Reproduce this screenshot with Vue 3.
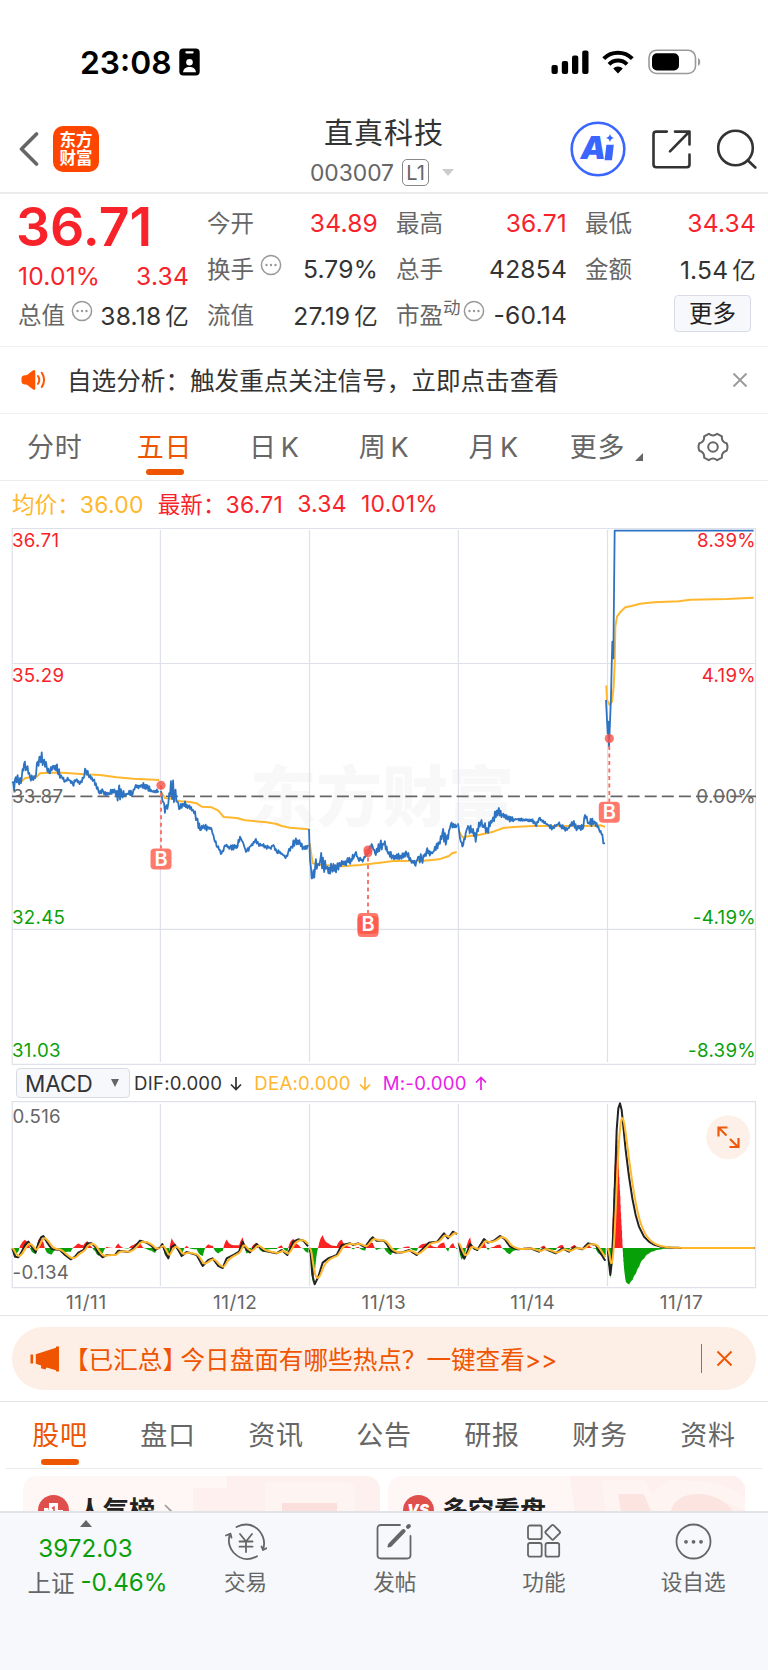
<template>
  <div class="page">
    <!-- 状态栏 -->
    <div class="status-bar">
      <div class="status-left">
        <span class="time">23:08</span>
        <svg class="badge-icon" width="21" height="28" viewBox="0 0 21 28">
          <rect x="0.3" y="0.5" width="20.4" height="27" rx="4" fill="#000" />
          <rect x="6.3" y="3.2" width="8.4" height="2.2" rx="1.1" fill="#fff" />
          <circle cx="10.5" cy="14.2" r="3.3" fill="#fff" />
          <path d="M4 24.3c.4-3.6 3-5.4 6.5-5.4s6.1 1.8 6.5 5.4z" fill="#fff" />
        </svg>
      </div>
      <div class="status-right">
        <svg width="38" height="24" viewBox="0 0 38 24">
          <rect x="0.5" y="15" width="6.3" height="9" rx="2" />
          <rect x="10.8" y="11" width="6.3" height="13" rx="2" />
          <rect x="21" y="5.5" width="6.3" height="18.5" rx="2" />
          <rect x="31.2" y="0.5" width="6.3" height="23.5" rx="2" />
        </svg>
        <svg class="wifi" width="32" height="24" viewBox="0 0 32 24">
          <g fill="none" stroke="#000" stroke-width="4">
            <path d="M1.7 8.6a20.3 20.3 0 0 1 28.6 0" />
            <path d="M7 14.3a12.8 12.8 0 0 1 18 0" />
          </g>
          <path d="M16 23.5l-4.8-4.9a6.8 6.8 0 0 1 9.6 0z" />
        </svg>
        <svg class="battery" width="53" height="26" viewBox="0 0 53 26">
          <rect x="1" y="1.2" width="46.5" height="23.3" rx="7.5" fill="none" stroke="#999" stroke-width="1.6" />
          <rect x="4" y="4.2" width="27" height="17.3" rx="5" />
          <path d="M50 9c3 1.2 3 6.6 0 7.8z" fill="#999" />
        </svg>
      </div>
    </div>

    <!-- 顶部导航 -->
    <header class="header">
      <div class="header-left">
        <svg width="20" height="34" viewBox="0 0 20 34">
          <path d="M17.5 2L2.5 17l15 15" fill="none" stroke="#666" stroke-width="3.6" stroke-linecap="round" stroke-linejoin="round" />
        </svg>
        <div class="logo"><span>东方</span><span>财富</span></div>
      </div>
      <div class="header-title">
        <h1>直真科技</h1>
        <div class="code">
          <span>003007</span>
          <span class="level">L1</span>
          <i class="arrow-down"></i>
        </div>
      </div>
      <div class="header-right">
        <svg width="56" height="56" viewBox="0 0 56 56">
          <circle cx="28" cy="28" r="26.3" fill="none" stroke="#3a66ff" stroke-width="2.6" />
          <text class="ai" x="10.5" y="38">A</text>
          <path d="M36.4 23.8h7.4l-1.8 15.4h-7.4z" fill="#3a66ff" />
          <path d="M40 12.8c.8 2.8 1.4 3.4 4.2 4.2-2.8.8-3.4 1.4-4.2 4.2-.8-2.8-1.4-3.4-4.2-4.2 2.8-.8 3.4-1.4 4.2-4.2z" fill="#3a66ff" />
        </svg>
        <svg width="39" height="39" viewBox="0 0 39 39" fill="none" stroke="#333" stroke-width="2.6" stroke-linecap="round" stroke-linejoin="round">
          <path d="M14.8 1.6H4.2Q1.5 1.6 1.5 4.2v30.3q0 2.7 2.7 2.7h30.6q2.7 0 2.7-2.7V24.5" />
          <path d="M23 1.6h14.5V14.5M37 2L18 21.3" />
        </svg>
        <svg width="40" height="40" viewBox="0 0 40 40" fill="none" stroke="#333" stroke-width="2.6" stroke-linecap="round">
          <circle cx="18.5" cy="19" r="17.3" />
          <path d="M30.7 31.3l7.6 7.2" />
        </svg>
      </div>
    </header>

    <!-- 行情数据 -->
    <section class="quote">
      <div class="quote-col">
        <div class="price">36.71</div>
        <div class="change"><span>10.01%</span><span>3.34</span></div>
        <div class="cell">
          <span class="label">总值</span>
          <svg class="more-dot" width="22" height="22" viewBox="0 0 22 22"><circle cx="11" cy="11" r="9.6" /><path d="M6.5 11h.01M11 11h.01M15.5 11h.01" /></svg>
          <span class="value">38.18<em>亿</em></span>
        </div>
      </div>
      <div v-for="(col, i) in quoteCols" :key="i" class="quote-col">
        <div v-for="item in col" :key="item.label" class="cell">
          <span class="label">{{ item.label }}<sup v-if="item.sup">{{ item.sup }}</sup></span>
          <svg v-if="item.dot" class="more-dot" width="22" height="22" viewBox="0 0 22 22"><circle cx="11" cy="11" r="9.6" /><path d="M6.5 11h.01M11 11h.01M15.5 11h.01" /></svg>
          <span class="value" :class="{ red: item.red }">{{ item.value }}<em v-if="item.unit">{{ item.unit }}</em></span>
        </div>
        <button v-if="i === 2" class="more-btn">更多</button>
      </div>
    </section>

    <!-- 分析提示 -->
    <div class="notice">
      <svg width="25" height="22" viewBox="0 0 25 22">
        <path d="M2.5 6.6L6 6 11.8 1.5Q14.3 0 14.3 2.5v16.8q0 2.5-2.5 1L6 15.8l-3.5-.6Q.5 14.5.5 12.5v-3.2q0-2.2 2-2.7z" fill="#ff5400" />
        <path d="M17 7q2.6 3.9 0 7.8M20.8 3.8q4.6 7 0 14.2" fill="none" stroke="#ff5400" stroke-width="2" stroke-linecap="round" />
      </svg>
      <p>自选分析：触发重点关注信号，立即点击查看</p>
      <svg width="16" height="16" viewBox="0 0 16 16"><path d="M1.5 1.5l13 13M14.5 1.5l-13 13" stroke="#999" stroke-width="1.8" /></svg>
    </div>

    <!-- 周期切换 -->
    <nav class="tabs">
      <div v-for="tab in periods" :key="tab" class="tab" :class="{ active: tab === '五日' }">
        <span>{{ tab }}</span>
        <i v-if="tab === '更多'" class="corner"></i>
      </div>
      <div class="tab gear">
        <svg width="32" height="30" viewBox="0 0 32 30" fill="none" stroke="#666" stroke-width="2" stroke-linejoin="round">
          <path d="M11.8 1.8Q16 5.2 20.2 1.8L24.9 4.4Q24.3 9.7 29.6 11.3Q31.4 15 29.6 18.7Q24.3 20.3 24.9 25.6L20.2 28.2Q16 24.8 11.8 28.2L7.1 25.6Q7.7 20.3 2.4 18.7Q.6 15 2.4 11.3Q7.7 9.7 7.1 4.4Z" />
          <circle cx="16" cy="15" r="4.8" />
        </svg>
      </div>
    </nav>

    <!-- 均价 / 最新 -->
    <div class="summary">
      <span class="avg">均价：<b>36.00</b></span>
      <span class="latest">最新：<b>36.71</b></span>
      <b class="num">3.34</b>
      <b class="num">10.01%</b>
    </div>

    <!-- 五日分时图 -->
    <svg class="chart" width="768" height="537" viewBox="0 528 768 537">
      <text class="watermark" x="250" y="821">东方财富</text>
      <g class="grid">
        <path d="M12.2 528.5H755.5V1064.3H12.2zM12 663.5H756M12 929.3H756" />
        <path d="M160.4 530V1062M309.5 530V1062M458.4 530V1062M607.5 530V1062" />
      </g>
      <path class="zero" d="M12 796.4H756" />
      <polyline v-for="(p, i) in avgLines" :key="'a' + i" class="line-avg" :points="p" />
      <polyline v-for="(p, i) in priceLines" :key="'p' + i" class="line-price" :points="p" />
      <g v-for="m in markers" :key="m.x" class="marker">
        <path :d="`M${m.x} ${m.dot}V${m.y}`" />
        <circle :cx="m.x" :cy="m.dot" r="4.6" />
        <template v-if="m.double">
          <circle :cx="m.x" :cy="m.dot + 3" r="4.3" />
          <rect :x="m.x - 10.5" :y="m.y + 3" width="21" height="21" rx="4" />
        </template>
        <rect :x="m.x - 10.5" :y="m.y" width="21" height="21" rx="4" />
        <text :x="m.x" :y="m.y + 17.5">B</text>
      </g>
      <g class="axis">
        <text v-for="a in axis" :key="a.left" :class="a.cls" x="12" :y="a.y">{{ a.left }}</text>
        <text v-for="a in axis" :key="a.right" :class="a.cls" x="756" :y="a.y" text-anchor="end">{{ a.right }}</text>
      </g>
    </svg>

    <!-- MACD 指标 -->
    <div class="macd-bar">
      <div class="macd-select">MACD<i></i></div>
      <span class="dif">DIF:0.000 <svg width="12" height="15" viewBox="0 0 12 15"><path d="M6 1v12.5M1 8.5l5 5 5-5" /></svg></span>
      <span class="dea">DEA:0.000 <svg width="12" height="15" viewBox="0 0 12 15"><path d="M6 1v12.5M1 8.5l5 5 5-5" /></svg></span>
      <span class="m">M:-0.000 <svg width="12" height="15" viewBox="0 0 12 15"><path d="M6 14V1.5M1 6.5l5-5 5 5" /></svg></span>
    </div>
    <svg class="chart" width="768" height="188" viewBox="0 1101 768 188">
      <g class="grid">
        <path d="M12.2 1101.6H755.5V1287.6H12.2z" />
        <path d="M160.4 1104V1286M309.5 1104V1286M458.4 1104V1286M607.5 1104V1286" />
      </g>
      <path :d="macd.red" fill="#fa2222" />
      <path :d="macd.green" fill="#08a008" />
      <polyline v-for="(p, i) in macd.dif" :key="'d' + i" class="line-dif" :points="p" />
      <polyline v-for="(p, i) in macd.dea" :key="'e' + i" class="line-avg" :points="p" />
      <g class="axis">
        <text class="gray" x="12.5" y="1122.7">0.516</text>
        <text class="gray" x="12.5" y="1279">-0.134</text>
      </g>
      <circle cx="728.2" cy="1137.3" r="22" fill="#fdf0e9" />
      <path d="M726.5 1135.5l-8-8M727.5 1127.5h-9v9M730 1139l8 8M729.5 1147h9v-9" fill="none" stroke="#ee5a0c" stroke-width="2.2" />
    </svg>
    <div class="dates">
      <span v-for="d in dates" :key="d">{{ d }}</span>
    </div>

    <!-- 热点横幅 -->
    <div class="banner-wrap">
      <div class="banner">
        <svg width="30" height="26" viewBox="0 0 30 26" fill="#ef5500">
          <rect x="0.5" y="8.5" width="2.6" height="9" />
          <path d="M5.8 8.3L26 1.8V.5h3v25h-3v-1.3l-9.5-2.7-1 2-4.5-1.2.2-2.7-5.4-1.8z" />
        </svg>
        <p><span class="tag">【已汇总】</span>今日盘面有哪些热点？一键查看&gt;&gt;</p>
        <i class="divider"></i>
        <svg width="17" height="17" viewBox="0 0 17 17"><path d="M1.5 1.5l14 14M15.5 1.5l-14 14" stroke="#ef5500" stroke-width="1.9" /></svg>
      </div>
    </div>

    <!-- 资讯切换 -->
    <nav class="tabs sub-tabs">
      <div v-for="tab in sections" :key="tab" class="tab" :class="{ active: tab === '股吧' }">
        <span>{{ tab }}</span>
      </div>
    </nav>

    <div class="cards">
      <div class="card">
        <svg class="card-bg" width="357" height="60" viewBox="0 0 357 60">
          <path d="M170 12h34V0h153v60H170z" fill="#fdf0ee" />
          <path d="M242 6h80q10 0 10 10v44h-90z" fill="#fef4f1" />
          <path d="M259 27h55v20h-55z" fill="#fbdfdc" />
        </svg>
        <svg class="card-icon" width="31" height="31" viewBox="0 0 31 31">
          <circle cx="15.5" cy="15.5" r="15.5" fill="#df4f4b" />
          <path d="M6 13h4.500v2H11V8h9v7h5v9H6z" fill="#fff" />
          <path d="M14 13.5l2-1.3V18" stroke="#df4f4b" stroke-width="1.5" fill="none" />
        </svg>
        <strong>人气榜</strong>
        <svg class="chevron" width="10" height="16" viewBox="0 0 10 16"><path d="M1 1l7 7-7 7" fill="none" stroke="#999" stroke-width="1.6" /></svg>
      </div>
      <div class="card">
        <svg class="card-bg" width="357" height="60" viewBox="0 0 357 60">
          <path d="M182 0h175v60H190z" fill="#fdf0ee" />
          <path d="M214 4h42l8 14 16-14h20l-22 40h-60z" fill="#fef5f2" />
          <path d="M357 22Q330 2 300 6q-24 4-34 32h20q16-28 71-4z" fill="#fef5f2" />
          <path d="M230 18h26l8 20-30 4zM282 38q4-20 28-20 24 0 37 20z" fill="#fce4e1" />
        </svg>
        <svg class="card-icon" width="31" height="31" viewBox="0 0 31 31">
          <circle cx="15.5" cy="15.5" r="15.5" fill="#df4f4b" />
          <text x="15" y="19.5">VS</text>
        </svg>
        <strong>多空看盘</strong>
      </div>
    </div>

    <!-- 底部栏 -->
    <footer class="bottom">
      <div class="index">
        <i class="arrow-up"></i>
        <span class="green">3972.03</span>
        <div class="index-row"><span>上证</span><b class="green">-0.46%</b></div>
      </div>
      <div class="action">
        <svg width="42" height="38" viewBox="0 0 42 38" fill="none" stroke="#666" stroke-width="1.8" stroke-linecap="round" stroke-linejoin="round">
          <path d="M11.5 4Q25-2.5 34.5 8q7 9 3.4 19M38 27l-1.5-3.5M38 27l3.5-1.8" />
          <path d="M32 33.3Q19 40.5 8.5 29.5 1.5 21 5 11M1 12.5l4.5-1.8 1 4" />
          <path d="M15 11l6 7.5 6-7.5M21 18.5V29M14.5 18.5h13M14.5 23.7h13" />
        </svg>
        <span>交易</span>
      </div>
      <div class="action">
        <svg width="37" height="38" viewBox="0 0 37 38" fill="none" stroke="#666" stroke-width="1.8" stroke-linecap="round">
          <path d="M24 2H5Q1.5 2 1.5 5.5v26.5Q1.5 35.5 5 35.5h26q3.5 0 3.5-3.5V13" />
          <path d="M27.5 8L14 22M32 3.8l.8-.8" stroke-width="4" />
          <path d="M14 21l-2 3 3.5-2.2" />
        </svg>
        <span>发帖</span>
      </div>
      <div class="action">
        <svg width="34" height="38" viewBox="0 0 34 38" fill="none" stroke="#666" stroke-width="1.8">
          <rect x="1" y="2.5" width="13.7" height="13.7" rx="2" />
          <rect x="1" y="20" width="13.7" height="13.7" rx="2" />
          <rect x="18.5" y="20" width="13.7" height="13.7" rx="2" />
          <rect x="20.1" y="3.7" width="11.2" height="11.2" rx="1.5" transform="rotate(45 25.7 9.3)" />
        </svg>
        <span>功能</span>
      </div>
      <div class="action">
        <svg width="37" height="38" viewBox="0 0 37 38">
          <circle cx="18.5" cy="18.5" r="17" fill="none" stroke="#666" stroke-width="1.8" />
          <g fill="#666"><circle cx="11" cy="18.8" r="1.9" /><circle cx="18.5" cy="18.8" r="1.9" /><circle cx="26" cy="18.8" r="1.9" /></g>
        </svg>
        <span>设自选</span>
      </div>
    </footer>
  </div>
</template>

<script setup>
const quoteCols = [
  [
    { label: '今开', value: '34.89', red: true },
    { label: '换手', value: '5.79%', dot: true },
    { label: '流值', value: '27.19', unit: '亿' }
  ],
  [
    { label: '最高', value: '36.71', red: true },
    { label: '总手', value: '42854' },
    { label: '市盈', sup: '动', value: '-60.14', dot: true }
  ],
  [
    { label: '最低', value: '34.34', red: true },
    { label: '金额', value: '1.54', unit: '亿' }
  ]
];

const periods = ['分时', '五日', '日 K', '周 K', '月 K', '更多'];
const sections = ['股吧', '盘口', '资讯', '公告', '研报', '财务', '资料'];
const dates = ['11/11', '11/12', '11/13', '11/14', '11/17'];

const axis = [
  { left: '36.71', right: '8.39%', y: 547.3, cls: 'red' },
  { left: '35.29', right: '4.19%', y: 682, cls: 'red' },
  { left: '33.87', right: '0.00%', y: 802.6, cls: 'gray' },
  { left: '32.45', right: '-4.19%', y: 923.5, cls: 'green' },
  { left: '31.03', right: '-8.39%', y: 1057, cls: 'green' }
];

const markers = [
  { x: 161, dot: 785.3, y: 848.5 },
  { x: 368, dot: 850, y: 913, double: true },
  { x: 609.3, dot: 738.5, y: 801.7 }
];

// 走势数据：每天一组 [x, y, 波动幅度]，三倍精度
const priceDays = [
  [[37, 2350, 24], [45, 2338, 22], [55, 2345, 16], [65, 2335, 10], [72, 2292, 12], [80, 2305, 12], [90, 2330, 10], [100, 2340, 8], [108, 2325, 6], [113, 2285, 14], [120, 2270, 20], [130, 2285, 12], [140, 2300, 8], [150, 2320, 8], [158, 2298, 14], [172, 2310, 12], [185, 2330, 8], [195, 2345, 5], [205, 2338, 5], [218, 2352, 6], [228, 2340, 8], [240, 2350, 6], [250, 2335, 6], [258, 2312, 14], [265, 2325, 5], [280, 2340, 5], [296, 2376, 10], [310, 2375, 6], [330, 2382, 8], [345, 2373, 10], [355, 2378, 22], [365, 2382, 8], [385, 2382, 12], [398, 2382, 8], [405, 2362, 5], [425, 2355, 6], [440, 2355, 10], [455, 2374, 5], [475, 2372, 4]],
  [[482, 2372, 4], [487, 2400, 12], [497, 2422, 18], [505, 2410, 10], [514, 2365, 24], [524, 2380, 22], [532, 2405, 10], [540, 2426, 8], [550, 2412, 10], [565, 2420, 6], [580, 2432, 6], [590, 2455, 8], [600, 2490, 10], [612, 2480, 8], [635, 2488, 4], [642, 2515, 4], [652, 2542, 6], [665, 2560, 8], [675, 2536, 4], [690, 2542, 5], [710, 2544, 7], [720, 2510, 6], [730, 2530, 4], [738, 2556, 6], [750, 2540, 5], [765, 2522, 6], [775, 2532, 5], [795, 2538, 4], [810, 2544, 7], [820, 2535, 5], [830, 2556, 5], [845, 2560, 5], [857, 2574, 5], [865, 2555, 5], [875, 2540, 5], [885, 2524, 10], [900, 2528, 10], [910, 2545, 6], [925, 2540, 3]],
  [[927, 2487, 0], [930, 2580, 3], [935, 2635, 8], [945, 2605, 18], [955, 2592, 16], [961, 2580, 22], [970, 2592, 16], [980, 2605, 14], [995, 2605, 12], [1010, 2602, 12], [1020, 2590, 10], [1040, 2585, 8], [1060, 2576, 10], [1068, 2556, 12], [1075, 2578, 5], [1090, 2580, 4], [1104, 2555, 6], [1115, 2532, 6], [1125, 2560, 5], [1140, 2538, 14], [1152, 2532, 18], [1162, 2555, 12], [1177, 2568, 8], [1202, 2568, 8], [1220, 2560, 6], [1232, 2578, 8], [1244, 2592, 6], [1257, 2570, 12], [1265, 2578, 10], [1279, 2556, 16], [1297, 2560, 10], [1317, 2530, 8], [1327, 2500, 14], [1339, 2525, 12], [1352, 2475, 8], [1372, 2478, 6]],
  [[1374, 2470, 16], [1380, 2515, 12], [1387, 2540, 12], [1397, 2500, 10], [1404, 2478, 10], [1414, 2495, 12], [1429, 2510, 14], [1442, 2468, 12], [1462, 2490, 12], [1477, 2460, 10], [1494, 2432, 10], [1507, 2445, 6], [1524, 2458, 8], [1552, 2458, 3], [1582, 2460, 3], [1602, 2464, 6], [1609, 2478, 8], [1617, 2455, 3], [1637, 2470, 4], [1657, 2485, 6], [1675, 2472, 10], [1702, 2488, 6], [1719, 2468, 8], [1732, 2485, 8], [1750, 2482, 6], [1755, 2445, 6], [1764, 2470, 8], [1782, 2464, 10], [1797, 2488, 4], [1807, 2503, 3], [1810, 2530, 0], [1815, 2530, 0]],
  [[1818, 2100, 0], [1823, 2200, 0], [1825, 2165, 0], [1827, 2240, 0], [1833, 2090, 0], [1835, 2000, 0], [1837, 1925, 0], [1840, 1975, 0], [1844, 1592, 0], [2261, 1592, 0]]
];

const avgDays = [
  [[65, 2344], [75, 2335], [90, 2332], [110, 2330], [120, 2320], [150, 2318], [190, 2318], [250, 2323], [300, 2325], [350, 2332], [400, 2336], [478, 2340]],
  [[483, 2375], [495, 2394], [515, 2396], [540, 2404], [570, 2406], [590, 2410], [605, 2420], [635, 2422], [655, 2432], [671, 2451], [710, 2454], [735, 2461], [800, 2467], [830, 2472], [845, 2478], [870, 2483], [926, 2488]],
  [[929, 2530], [938, 2590], [960, 2594], [1000, 2597], [1030, 2599], [1080, 2595], [1140, 2588], [1180, 2583], [1272, 2582], [1317, 2578], [1347, 2568], [1356, 2560], [1370, 2556]],
  [[1376, 2492], [1387, 2512], [1410, 2508], [1440, 2504], [1480, 2495], [1510, 2484], [1552, 2480], [1602, 2478], [1772, 2478], [1800, 2476], [1815, 2480]],
  [[1819, 2056], [1821, 2100], [1829, 2115], [1836, 2105], [1841, 2060], [1844, 1990], [1846, 1880], [1851, 1850], [1862, 1835], [1876, 1822], [1895, 1818], [1920, 1811], [1962, 1807], [2037, 1804], [2070, 1799], [2180, 1797], [2261, 1793]]
];

const difDays = [
  [[37, 625], [45, 650], [55, 652], [65, 635], [75, 615], [85, 605], [95, 620], [107, 637], [115, 610], [123, 592], [130, 588], [140, 605], [155, 627], [180, 630], [195, 645], [212, 658], [225, 650], [235, 638], [250, 630], [262, 610], [275, 610], [285, 620], [295, 640], [308, 652], [320, 645], [345, 645], [355, 632], [385, 636], [400, 625], [420, 602], [440, 608], [455, 618], [465, 630], [480, 622]],
  [[481, 622], [487, 612], [497, 640], [505, 655], [515, 620], [525, 615], [535, 630], [545, 648], [560, 636], [590, 645], [608, 678], [625, 660], [638, 655], [655, 678], [668, 684], [680, 655], [700, 645], [717, 635], [728, 605], [740, 630], [750, 637], [770, 612], [790, 632], [830, 640], [845, 630], [862, 645], [880, 605], [895, 598], [910, 602], [925, 620]],
  [[928, 624], [932, 640], [937, 705], [944, 733], [955, 710], [968, 668], [985, 655], [1010, 645], [1025, 615], [1050, 610], [1060, 615], [1075, 610], [1095, 622], [1110, 600], [1118, 592], [1130, 602], [1152, 602], [1162, 615], [1172, 632], [1187, 638], [1207, 637], [1227, 630], [1250, 645], [1267, 628], [1287, 608], [1312, 605], [1332, 580], [1344, 595], [1359, 575], [1372, 583]],
  [[1376, 610], [1384, 640], [1393, 656], [1402, 635], [1410, 612], [1422, 625], [1432, 630], [1452, 597], [1464, 608], [1482, 602], [1500, 588], [1514, 597], [1530, 620], [1552, 628], [1592, 625], [1617, 635], [1632, 625], [1667, 640], [1687, 625], [1707, 635], [1724, 622], [1747, 628], [1764, 610], [1787, 615], [1802, 640], [1817, 664]],
  [[1823, 625], [1826, 660], [1831, 705], [1835, 670], [1839, 590], [1844, 450], [1850, 270], [1855, 205], [1860, 190], [1865, 210], [1870, 260], [1877, 330], [1887, 410], [1897, 475], [1907, 525], [1917, 560], [1932, 590], [1947, 605], [1962, 614], [1982, 620], [2012, 623], [2052, 624], [2265, 624]]
];

let seed = 7;
function rand() {
  seed = (seed * 16807) % 2147483647;
  return seed / 2147483647;
}

function px(v) {
  return (v / 3).toFixed(2);
}

// 在关键点之间插入随机抖动
function jitter(points) {
  const out = [];
  let sign = 1;
  for (let i = 0; i < points.length - 1; i++) {
    const [x0, y0, a0] = points[i];
    const [x1, y1, a1] = points[i + 1];
    out.push(`${px(x0)},${px(y0)}`);
    if (!a0 && !a1) continue;
    for (let x = x0 + 2.6; x < x1 - 1; x += 2.6) {
      const t = (x - x0) / (x1 - x0);
      const amp = (a0 + (a1 - a0) * t) * 1.4;
      sign = -sign;
      out.push(`${px(x)},${px(y0 + (y1 - y0) * t + sign * rand() * amp)}`);
    }
  }
  const last = points[points.length - 1];
  out.push(`${px(last[0])},${px(last[1])}`);
  return out.join(' ');
}

const priceLines = priceDays.map(jitter);
const avgLines = avgDays.map(day => day.map(([x, y]) => `${px(x)},${px(y)}`).join(' '));

// DEA 为 DIF 的指数平滑，柱体为两者之差的两倍
function buildMacd() {
  const zero = 624;
  const top = 3120;
  const dif = [];
  const dea = [];
  let red = '';
  let green = '';
  difDays.forEach(day => {
    const difPoints = [];
    const deaPoints = [];
    let ema = day[0][1];
    for (let i = 0; i < day.length - 1; i++) {
      const [x0, y0] = day[i];
      const [x1, y1] = day[i + 1];
      for (let x = x0; x < x1; x++) {
        const y = y0 + ((y1 - y0) * (x - x0)) / (x1 - x0);
        ema += (y - ema) / 8;
        difPoints.push(`${px(x)},${px(y + top)}`);
        deaPoints.push(`${px(x)},${px(ema + top)}`);
        const bar = (y - ema) * 2;
        const rect = `M${px(x)} ${px(zero + top)}v${px(bar)}h.4V${px(zero + top)}z`;
        if (bar < 0) red += rect;
        else green += rect;
      }
    }
    dif.push(difPoints.join(' '));
    dea.push(deaPoints.join(' '));
  });
  return { dif, dea, red, green };
}

const macd = buildMacd();
</script>

<style>
body {
  background: #fff;
}
</style>

<style scoped>
.page {
  width: 768px;
  height: 1670px;
  overflow: hidden;
  display: flex;
  flex-direction: column;
  background: #fff;
  color: #333;
  font-family: Inter, 'Noto Sans CJK SC', sans-serif;
}

.page > * {
  flex-shrink: 0;
  box-sizing: border-box;
}

svg {
  display: block;
  flex-shrink: 0;
}

b {
  font-weight: 400;
}

/* 状态栏 */
.status-bar {
  height: 106px;
  padding: 18px 67px 0 80px;
  display: flex;
  align-items: center;
  justify-content: space-between;
}

.status-left,
.status-right {
  display: flex;
  align-items: center;
}

.time {
  font-size: 31.8px;
  font-weight: 600;
  color: #000;
  width: 99px;
}

.wifi {
  margin-left: 13px;
}

.battery {
  margin-left: 14px;
}

/* 顶部导航 */
.header {
  height: 88px;
  border-bottom: 2px solid #ececee;
  padding: 0 11px;
  display: grid;
  grid-template-columns: 1fr 200px 1fr;
  align-items: center;
}

.header-left {
  display: flex;
  align-items: center;
  gap: 14px;
  padding-left: 8px;
}

.logo {
  width: 46px;
  height: 46px;
  border-radius: 10px;
  background: #ff4600;
  color: #fff;
  font-size: 16.5px;
  line-height: 18.5px;
  font-weight: 700;
  display: flex;
  flex-direction: column;
  align-items: center;
  justify-content: center;
}

.header-title {
  display: flex;
  flex-direction: column;
  align-items: center;
  padding-top: 10px;
}

.header-title h1 {
  margin: 0;
  font-size: 29px;
  line-height: 36px;
  font-weight: 400;
  letter-spacing: 1px;
}

.code {
  display: flex;
  align-items: center;
  color: #666;
  font-size: 22.8px;
  height: 40px;
  margin-left: -4px;
}

.level {
  width: 25px;
  height: 25px;
  line-height: 26px;
  border: 1.5px solid #888;
  border-radius: 5px;
  font-size: 20px;
  text-align: center;
  margin: 0 13px 0 8px;
}

.arrow-down {
  border: 6.5px solid transparent;
  border-top: 7px solid #ccc;
  border-bottom: 0;
}

.header-right {
  display: flex;
  align-items: center;
  justify-content: flex-end;
  gap: 26px;
}

.ai {
  font-size: 32px;
  font-weight: 900;
  font-style: italic;
  fill: #3a66ff;
}

/* 行情数据 */
.quote {
  height: 153px;
  padding: 6px 12px 0 18px;
  border-bottom: 1px solid #f0f0f2;
  display: grid;
  grid-template-columns: repeat(4, 171px);
  column-gap: 18px;
}

.price {
  height: 50px;
  line-height: 53px;
  font-size: 53.6px;
  font-weight: 600;
  color: #f8232a;
  margin-left: -2px;
}

.change {
  display: flex;
  justify-content: space-between;
  height: 42px;
  line-height: 53px;
  font-size: 24.6px;
  letter-spacing: 0.2px;
  color: #f8232a;
}

.cell {
  height: 46px;
  display: flex;
  align-items: center;
  white-space: nowrap;
}

.label {
  font-size: 23.5px;
  color: #666;
  margin-top: -2px;
}

.label sup {
  font-size: 17.5px;
  line-height: 0;
  vertical-align: 10px;
}

.more-dot {
  margin: -9px 0 0 6px;
  fill: none;
  stroke: #999;
  stroke-width: 1.5;
}

.more-dot path {
  stroke-width: 2.4;
  stroke-linecap: round;
}

.label:has(sup) + .more-dot {
  margin-left: 2px;
}

.value {
  margin-left: auto;
  font-size: 24.6px;
  letter-spacing: 0.2px;
}

.value em {
  font-style: normal;
  font-size: 23.5px;
  margin-left: 4px;
}

.red {
  color: #f8232a;
  fill: #f8232a;
}

.green {
  color: #0a9f0a;
  fill: #0a9f0a;
}

.gray {
  fill: #666;
}

.more-btn {
  box-sizing: border-box;
  display: block;
  width: 77px;
  height: 37px;
  margin: 3px 5px 0 auto;
  padding: 0;
  border: 1px solid #d9dce6;
  border-radius: 4px;
  background: #f7f8fb;
  font-family: inherit;
  font-size: 23.5px;
  line-height: 34px;
  color: #222;
}

/* 分析提示 */
.notice {
  height: 67px;
  padding: 0 20px 0 21px;
  border-bottom: 1px solid #f0f0f2;
  display: flex;
  align-items: center;
}

.notice p {
  flex: 1;
  margin: -3px 0 0 21px;
  font-size: 24.6px;
}

/* 标签页 */
.tabs {
  height: 67px;
  border-bottom: 1px solid #ececee;
  display: flex;
}

.tab {
  flex: 1;
  display: flex;
  align-items: center;
  justify-content: center;
  position: relative;
  font-size: 27px;
  letter-spacing: 0.8px;
  word-spacing: -4.5px;
  color: #666;
}

.tab span {
  margin-top: -3px;
}

.tab.active {
  color: #ee5500;
}

.tab.active::after {
  content: '';
  position: absolute;
  left: 50%;
  bottom: 5px;
  width: 38px;
  height: 6px;
  margin-left: -19px;
  border-radius: 3px;
  background: #ee5500;
}

.corner {
  border-left: 8px solid transparent;
  border-bottom: 8px solid #666;
  margin: 20px -6px 0 10px;
}

/* 均价 */
.summary {
  height: 47px;
  padding: 0 0 2px 12px;
  display: flex;
  align-items: center;
  font-size: 22.6px;
  color: #f8232a;
}

.summary b {
  font-size: 22.9px;
  letter-spacing: 0.3px;
}

.summary .avg {
  color: #ffb72e;
  margin-right: 14px;
}

.summary .num {
  margin-left: 14px;
}

/* 图表 */
.grid path {
  fill: none;
  stroke: #dfe1ea;
  stroke-width: 1.2;
}

.watermark {
  font-size: 66px;
  font-weight: 900;
  fill: #f8f8f8;
}

.zero {
  stroke: #666;
  stroke-width: 1.8;
  stroke-dasharray: 12 5.1;
}

.line-price,
.line-avg,
.line-dif {
  fill: none;
  stroke-width: 2;
  stroke-linejoin: round;
}

.line-price {
  stroke: #2e73c2;
  stroke-width: 1.8;
}

.line-avg {
  stroke: #ffb72e;
}

.line-dif {
  stroke: #222;
}

.marker path {
  stroke: #f86a60;
  stroke-width: 1.8;
  stroke-dasharray: 4 3.5;
}

.marker circle {
  fill: #f5504a;
  opacity: 0.8;
}

.marker rect {
  fill: #ff5444;
  opacity: 0.78;
}

.marker text {
  font-size: 20px;
  font-weight: 600;
  fill: #fff;
  text-anchor: middle;
}

.axis text {
  font-size: 18.7px;
  letter-spacing: 0.3px;
}

/* MACD */
.macd-bar {
  height: 36px;
  padding-left: 16px;
  display: flex;
  align-items: center;
  font-size: 18.6px;
}

.macd-select {
  box-sizing: border-box;
  width: 114px;
  height: 30px;
  padding: 0 10px 0 8px;
  margin-right: 4px;
  border: 1px solid #d9dce3;
  border-radius: 4px;
  background: #f7f8fb;
  display: flex;
  align-items: center;
  justify-content: space-between;
  font-size: 22.5px;
}

.macd-select i {
  border: 4.5px solid transparent;
  border-top: 8px solid #666;
  border-bottom: 0;
}

.macd-bar span {
  display: flex;
  align-items: center;
  gap: 8px;
  margin-right: 12px;
  letter-spacing: 0.25px;
}

.macd-bar svg {
  fill: none;
  stroke: currentColor;
  stroke-width: 1.7;
}

.macd-bar .dea {
  color: #ffb72e;
}

.macd-bar .m {
  color: #e81ee8;
}

.dates {
  height: 27px;
  padding: 0 12px;
  border-bottom: 1px solid #e4e5e9;
  display: flex;
  align-items: center;
  font-size: 19px;
  letter-spacing: 0.6px;
  color: #666;
}

.dates span {
  flex: 1;
  text-align: center;
}

/* 横幅 */
.banner-wrap {
  height: 86px;
  padding: 11px 12px 0;
  border-bottom: 1px solid #e4e5e9;
}

.banner {
  height: 63px;
  padding: 0 23px 0 18px;
  border-radius: 32px;
  background: #fdeee6;
  color: #ef5500;
  display: flex;
  align-items: center;
}

.banner p {
  flex: 1;
  margin: -2px 0 0 4px;
  font-size: 24.6px;
  white-space: nowrap;
}

.tag {
  margin-right: -6.5px;
}

.divider {
  width: 1.5px;
  height: 29px;
  background: #ef5500;
  margin-right: 14px;
}

.sub-tabs {
  margin: 0 6px;
}

.sub-tabs .tab.active::after {
  bottom: 3px;
}

/* 卡片 */
.cards {
  height: 42px;
  padding: 7px 23px 0;
  overflow: hidden;
  display: flex;
  align-items: flex-start;
  gap: 8px;
}

.card {
  position: relative;
  flex: 1;
  height: 60px;
  padding-left: 15px;
  box-sizing: border-box;
  border-radius: 14px;
  overflow: hidden;
  background: #fff7f5;
  display: flex;
  align-items: center;
}

.card-bg {
  position: absolute;
  left: 0;
  top: 0;
}

.card-icon {
  position: relative;
  margin-top: 9px;
}

.card-icon text {
  font-size: 15px;
  font-weight: 900;
  font-style: italic;
  fill: #fff;
  text-anchor: middle;
}

.card strong {
  position: relative;
  margin: 4px 0 0 8px;
  font-size: 26px;
  font-weight: 700;
  color: #222;
}

.chevron {
  position: relative;
  margin: 11px 0 0 9px;
}

/* 底部栏 */
.bottom {
  height: 159px;
  border-top: 2px solid #e2e3e7;
  background: #f7f8fb;
  display: grid;
  grid-template-columns: 171px repeat(4, 149.2px);
  color: #666;
}

.index {
  display: flex;
  flex-direction: column;
  align-items: center;
  padding-top: 7px;
  font-size: 24.2px;
}

.arrow-up {
  border: 6.5px solid transparent;
  border-bottom: 7px solid #666;
  border-top: 0;
}

.index > span {
  line-height: 36px;
  margin-top: 4px;
}

.index-row {
  display: flex;
  align-items: center;
  gap: 6px;
  height: 31px;
  margin-left: 24px;
}

.index-row span {
  font-size: 23.5px;
  margin-top: -2px;
}

.action {
  display: flex;
  flex-direction: column;
  align-items: center;
  padding-top: 10px;
}

.action span {
  margin-top: 4px;
  font-size: 21.6px;
  line-height: 34px;
}
</style>
